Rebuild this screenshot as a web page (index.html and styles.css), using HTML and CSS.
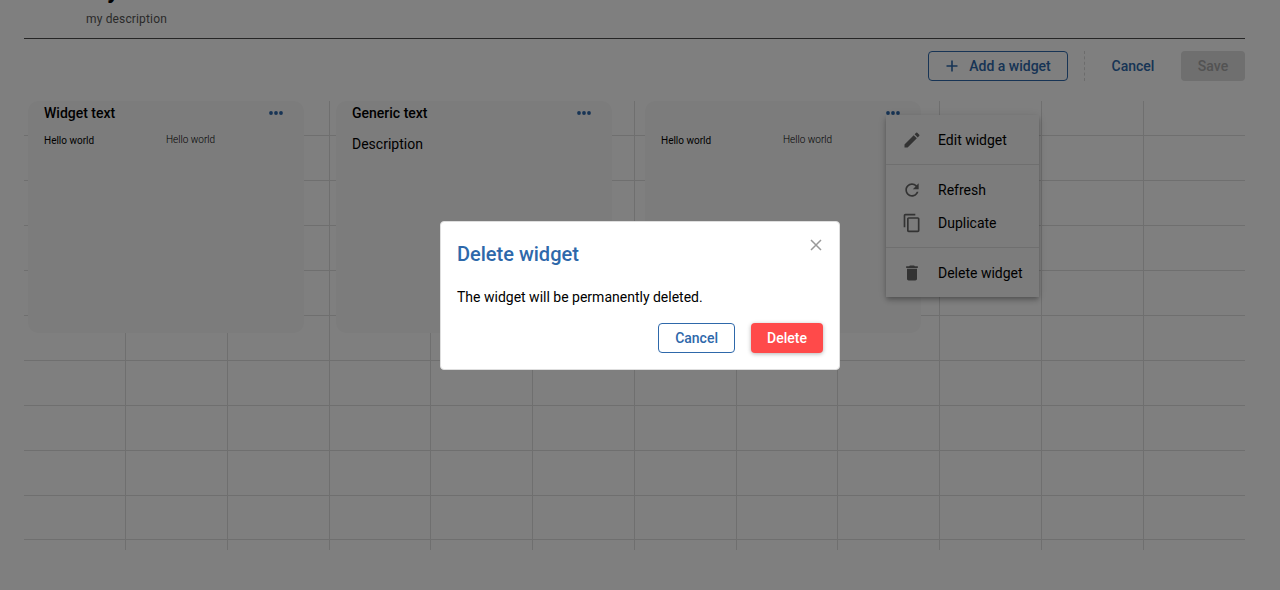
FILE: index.html
```html
<!DOCTYPE html>
<html lang="en">
<head>
<meta charset="utf-8">
<title>Dashboard</title>
<link rel="stylesheet" href="styles.css">
</head>
<body>
<div class="page">
  <header class="page-header">
    <h1 class="page-title">My</h1>
    <p class="page-description">my description</p>
  </header>
  <div class="toolbar">
    <button class="btn btn-outline btn-add"><svg width="12" height="12" viewBox="0 0 12 12"><path d="M6 .5v11M.5 6h11" stroke="currentColor" stroke-width="1.6" fill="none"/></svg>Add a widget</button>
    <span class="toolbar-divider"></span>
    <button class="btn btn-text">Cancel</button>
    <button class="btn btn-disabled" disabled>Save</button>
  </div>
  <main class="board">
    <svg class="grid-lines" width="1221" height="449" viewBox="0 0 1221 449"><path d="M101.5 0v449M203.5 0v449M305.5 0v449M406.5 0v449M508.5 0v449M610.5 0v449M712.5 0v449M813.5 0v449M915.5 0v449M1017.5 0v449M1119.5 0v449M0 34.5h1221M0 79.5h1221M0 124.5h1221M0 169.5h1221M0 214.5h1221M0 259.5h1221M0 304.5h1221M0 349.5h1221M0 394.5h1221M0 438.5h1221"/></svg>
    <section class="card">
      <div class="card-head"><h2 class="card-title">Widget text</h2><svg class="more" width="14" height="4" viewBox="0 0 14 4"><circle cx="2" cy="2" r="1.9"/><circle cx="7" cy="2" r="1.9"/><circle cx="12" cy="2" r="1.9"/></svg></div>
      <div class="card-columns"><span class="hello">Hello world</span><span class="hello hello-light">Hello world</span></div>
    </section>
    <section class="card">
      <div class="card-head"><h2 class="card-title">Generic text</h2><svg class="more" width="14" height="4" viewBox="0 0 14 4"><circle cx="2" cy="2" r="1.9"/><circle cx="7" cy="2" r="1.9"/><circle cx="12" cy="2" r="1.9"/></svg></div>
      <p class="card-text">Description</p>
    </section>
    <section class="card card-last">
      <div class="card-head"><h2 class="card-title"></h2><svg class="more" width="14" height="4" viewBox="0 0 14 4"><circle cx="2" cy="2" r="1.9"/><circle cx="7" cy="2" r="1.9"/><circle cx="12" cy="2" r="1.9"/></svg></div>
      <div class="card-columns"><span class="hello">Hello world</span><span class="hello hello-light">Hello world</span></div>
    </section>
  </main>
</div>

<ul class="menu">
  <li class="menu-item"><svg width="20" height="20" viewBox="0 0 24 24"><path d="M3 17.250V21h3.750L17.810 9.940l-3.750-3.750L3 17.250zM20.710 7.040a.996.996 0 0 0 0-1.410l-2.340-2.340a.996.996 0 0 0-1.410 0l-1.830 1.830 3.750 3.750 1.830-1.830z"/></svg>Edit widget</li>
  <li class="menu-separator"></li>
  <li class="menu-item"><svg width="20" height="20" viewBox="0 0 24 24"><path d="M17.650 6.350C16.200 4.900 14.210 4 12 4c-4.420 0-7.990 3.580-7.990 8s3.570 8 7.990 8c3.730 0 6.840-2.550 7.730-6h-2.080c-.82 2.330-3.040 4-5.650 4-3.310 0-6-2.690-6-6s2.690-6 6-6c1.660 0 3.140.69 4.220 1.780L13 11h7V4l-2.350 2.350z"/></svg>Refresh</li>
  <li class="menu-item"><svg width="20" height="20" viewBox="0 0 24 24"><path d="M16 1H4c-1.100 0-2 .9-2 2v14h2V3h12V1zm3 4H8c-1.100 0-2 .9-2 2v14c0 1.100.9 2 2 2h11c1.100 0 2-.9 2-2V7c0-1.100-.9-2-2-2zm0 16H8V7h11v14z"/></svg>Duplicate</li>
  <li class="menu-separator"></li>
  <li class="menu-item"><svg width="20" height="20" viewBox="0 0 24 24"><path d="M6 19c0 1.100.9 2 2 2h8c1.100 0 2-.9 2-2V7H6v12zM19 4h-3.500l-1-1h-5l-1 1H5v2h14V4z"/></svg>Delete widget</li>
</ul>

<div class="backdrop">
  <div class="dialog" role="dialog">
    <div class="dialog-head">
      <h2 class="dialog-title">Delete widget</h2>
      <svg class="close" width="12" height="12" viewBox="0 0 12 12"><path d="M1 1l10 10M11 1L1 11"/></svg>
    </div>
    <p class="dialog-text">The widget will be permanently deleted.</p>
    <div class="dialog-actions">
      <button class="btn btn-outline">Cancel</button>
      <button class="btn btn-danger">Delete</button>
    </div>
  </div>
</div>
</body>
</html>
```

FILE: styles.css
```css
* { box-sizing: border-box; margin: 0; padding: 0; }
body { width: 1280px; height: 590px; overflow: hidden; background: #fff; color: #000; font-family: Roboto, "Liberation Sans", sans-serif; }
.page { height: 590px; padding: 0 35px 0 24px; overflow: hidden; }
.page-header { display: flow-root; height: 39px; padding-left: 62px; border-bottom: 1px solid #4a4a4a; }
.page-title { height: 35px; margin-top: -24px; font-size: 24px; font-weight: 700; line-height: 28px; }
.page-description { font-size: 12px; line-height: 16px; letter-spacing: .15px; color: #555; }

.toolbar { display: flex; justify-content: flex-end; height: 62px; padding-top: 12px; }
.btn { display: flex; align-items: center; justify-content: center; height: 30px; padding: 0 16px; border: 1px solid transparent; border-radius: 4px; background: none; font: 500 14px/24px Roboto, "Liberation Sans", sans-serif; }
.btn-outline { border-color: #2e68aa; color: #2e68aa; }
.btn-add { width: 140px; gap: 11px; padding: 0 15px 0 16px; }
.toolbar-divider { width: 0; height: 30px; margin-left: 16px; border-left: 1px dashed #d8d8d8; }
.btn-text { width: 76px; margin: 0 10px; color: #2e68aa; }
.btn-disabled { width: 64px; background: #dedede; color: #a6a6a6; }
.toolbar .btn-disabled { border: 0; }

.board { position: relative; display: flex; gap: 32px; height: 449px; padding-left: 4px; }
.grid-lines { position: absolute; top: 0; left: 0; stroke: #dedede; stroke-width: 1; }
.card { position: relative; width: 276px; height: 232px; padding: 0 16px; border-radius: 10px; background: #f9f9f9; }
.card-last { margin-left: 1px; }
.card-head { display: flex; align-items: center; justify-content: space-between; height: 24px; padding-right: 5px; }
.card-title { font-size: 14px; font-weight: 500; line-height: 24px; }
.more { fill: #2e68aa; }
.card-columns { display: grid; grid-template-columns: 122px 122px; padding-top: 7px; }
.hello { font-size: 10px; line-height: 18px; }
.hello-light { margin-top: -1px; font-weight: 300; color: #000; }
.card-text { padding-top: 7px; font-size: 14px; line-height: 24px; }

.menu { position: absolute; top: 115px; left: 886px; width: 153px; height: 182px; padding: 8px 0; list-style: none; background: #f9f9f9; box-shadow: 0 2px 4px -1px rgba(0,0,0,.2), 0 4px 5px rgba(0,0,0,.14), 0 1px 10px rgba(0,0,0,.12); }
.menu-item { display: flex; align-items: center; gap: 16px; height: 33px; padding-left: 16px; font-size: 14px; }
.menu-item svg { fill: #666; }
.menu-separator { height: 1px; margin: 8px 0; background: #dedede; }

.backdrop { position: absolute; inset: 0; display: flex; align-items: center; justify-content: center; background: rgba(0,0,0,.5); }
.dialog { width: 400px; height: 149px; border: 1px solid #dedede; border-radius: 4px; background: #fff; padding: 16px; }
.dialog-head { display: flex; justify-content: space-between; height: 47px; padding-right: 1px; }
.dialog-title { font-size: 20px; font-weight: 500; line-height: 32px; color: #2e68aa; }
.close { stroke: #999; stroke-width: 1.5; fill: none; margin-top: 1px; }
.dialog-text { font-size: 14px; line-height: 24px; }
.dialog-actions { display: flex; justify-content: flex-end; gap: 16px; padding-top: 14px; }
.btn-danger { width: 72px; border: 0; background: #ff4a4a; color: #fff; box-shadow: 0 1px 4px rgba(0,0,0,.3); }
```
